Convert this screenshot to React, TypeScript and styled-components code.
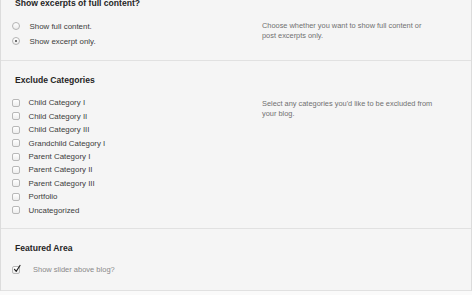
import React from "react";
import styled, { createGlobalStyle } from "styled-components";

const Global = createGlobalStyle`
  html, body { margin: 0; padding: 0; background: #fafafa; overflow: hidden; }
  body { font-family: "Liberation Sans", Arial, sans-serif; }
`;

const Panel = styled.div`
  width: 470px;
  margin-top: -4px;
  background: #f5f5f5;
  border-left: 1px solid #dcdcdc;
  border-right: 1px solid #dcdcdc;
`;

const Section = styled.section<{ $top: number; $bottom: number }>`
  padding: ${(p) => p.$top}px 0 ${(p) => p.$bottom}px 0;
  border-bottom: 1px solid #e1e1e1;
  display: grid;
  grid-template-columns: 261px 1fr;
`;

const Heading = styled.h3`
  grid-column: 1 / -1;
  margin: 0 0 0 14px;
  font-size: 8.6px;
  line-height: 14px;
  font-weight: bold;
  color: #252525;
`;

const Options = styled.div<{ $gap: number }>`
  margin-top: ${(p) => p.$gap}px;
  display: flex;
  flex-direction: column;
`;

const Desc = styled.p<{ $top: number }>`
  margin: ${(p) => p.$top}px 0 0 0;
  max-width: 173px;
  font-size: 7.4px;
  line-height: 10.8px;
  color: #707070;
`;

const Row = styled.label<{ $h: number; $textX: number; $muted?: boolean }>`
  display: flex;
  align-items: center;
  height: ${(p) => p.$h}px;
  padding-left: 11px;
  font-size: ${(p) => (p.$muted ? 7.5 : 7.9)}px;
  color: ${(p) => (p.$muted ? "#8a8a8a" : "#3c3c3c")};
  gap: ${(p) => p.$textX}px;
`;

const Radio = styled.span<{ $on?: boolean }>`
  position: relative;
  width: 8px;
  height: 8px;
  box-sizing: border-box;
  border-radius: 50%;
  border: 1px solid #b4b4b4;
  background: linear-gradient(#ffffff, #ececec);
  flex: none;
  &::after {
    content: "";
    display: ${(p) => (p.$on ? "block" : "none")};
    position: absolute;
    left: 2px;
    top: 2px;
    width: 2px;
    height: 2px;
    border-radius: 50%;
    background: #444;
  }
`;

const Box = styled.span`
  position: relative;
  width: 8px;
  height: 8px;
  box-sizing: border-box;
  border-radius: 2px;
  border: 1px solid #b8b8b8;
  background: linear-gradient(#ffffff, #ededed);
  flex: none;
`;

const Check = styled.svg`
  position: absolute;
  left: 0px;
  top: -2px;
  overflow: visible;
`;

const categories = [
  "Child Category I",
  "Child Category II",
  "Child Category III",
  "Grandchild Category I",
  "Parent Category I",
  "Parent Category II",
  "Parent Category III",
  "Portfolio",
  "Uncategorized",
];

export default function App() {
  return (
    <>
      <Global />
      <Panel>
        <Section $top={0} $bottom={11.5}>
          <Heading>Show excerpts of full content?</Heading>
          <Options $gap={8.5}>
            <Row $h={15} $textX={9.5}>
              <Radio />
              Show full content.
            </Row>
            <Row $h={15} $textX={9.5}>
              <Radio $on />
              Show excerpt only.
            </Row>
          </Options>
          <Desc $top={10.5}>
            Choose whether you want to show full content or post excerpts only.
          </Desc>
        </Section>
        <Section $top={12} $bottom={11}>
          <Heading>Exclude Categories</Heading>
          <Options $gap={9.3}>
            {categories.map((c) => (
              <Row key={c} $h={13.4} $textX={8.5}>
                <Box />
                {c}
              </Row>
            ))}
          </Options>
          <Desc $top={11.5}>
            Select any categories you'd like to be excluded from your blog.
          </Desc>
        </Section>
        <Section $top={12} $bottom={13}>
          <Heading>Featured Area</Heading>
          <Options $gap={8}>
            <Row $h={14} $textX={13} $muted>
              <Box>
                <Check width="8" height="8" viewBox="0 0 8 8">
                  <path
                    d="M1.5 4.3 L3.3 6.3 L7 0.5"
                    fill="none"
                    stroke="#222"
                    strokeWidth="1.2"
                    strokeLinecap="round"
                    strokeLinejoin="round"
                  />
                </Check>
              </Box>
              Show slider above blog?
            </Row>
          </Options>
        </Section>
      </Panel>
    </>
  );
}
